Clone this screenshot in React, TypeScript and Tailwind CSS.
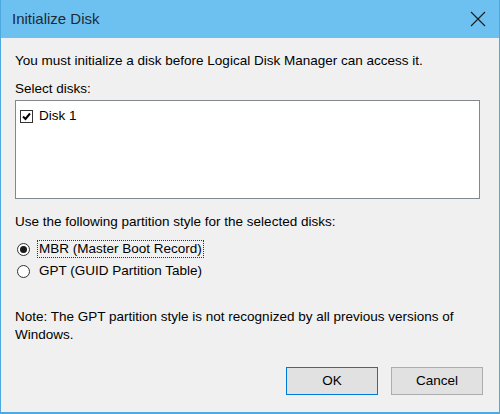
import { useState } from "react";

const FONT = { fontFamily: '"Liberation Sans", Arial, sans-serif' };

function Radio({ checked }: { checked: boolean }) {
  return (
    <span className="flex h-[13px] w-[13px] shrink-0 items-center justify-center rounded-full border border-[#333] bg-white">
      {checked && <span className="h-[7px] w-[7px] rounded-full bg-[#1a1a1a]" />}
    </span>
  );
}

export default function App() {
  const [style, setStyle] = useState<"mbr" | "gpt">("mbr");

  return (
    <div
      className="flex h-[414px] w-[500px] flex-col overflow-hidden border-b-2 border-l border-r border-[#4ea9de] bg-[#f0f0f0] text-[13.5px] text-black"
      style={FONT}
    >
      {/* title bar */}
      <div className="flex h-[38px] shrink-0 items-center justify-between bg-[#6cc1f0] pl-[11px] pr-[13px]">
        <span className="text-[15px] text-[#1e2a33]">Initialize Disk</span>
        <svg width="16" height="16" viewBox="0 0 16 16" className="text-[#1a1a1a]">
          <path d="M1 1 L15 15 M15 1 L1 15" stroke="currentColor" strokeWidth="1.1" fill="none" />
        </svg>
      </div>

      <div className="flex flex-1 flex-col px-[14px]">
        <p className="mt-[15px] leading-[16px]">
          You must initialize a disk before Logical Disk Manager can access it.
        </p>
        <p className="mt-[12px] leading-[16px]">Select disks:</p>

        <div className="mt-[3px] h-[99px] w-[465px] border border-[#828790] bg-white px-[4px] pt-[7px]">
          <label className="flex items-center gap-[6px] leading-[16px]">
            <span className="flex h-[13px] w-[13px] items-center justify-center border border-[#333] bg-white">
              <svg width="9" height="9" viewBox="0 0 9 9">
                <path d="M1 4.5 L3.5 7 L8 1.5" stroke="#000" strokeWidth="2" fill="none" />
              </svg>
            </span>
            Disk 1
          </label>
        </div>

        <p className="mt-[15px] leading-[16px]">
          Use the following partition style for the selected disks:
        </p>

        <div className="mt-[10px] flex flex-col gap-[5px] pl-[2px]">
          <button className="flex items-center gap-[7px] text-left" onClick={() => setStyle("mbr")}>
            <Radio checked={style === "mbr"} />
            <span className="border border-dotted border-[#333] px-[1px] leading-[16px]">
              MBR (Master Boot Record)
            </span>
          </button>
          <button className="flex items-center gap-[7px] text-left" onClick={() => setStyle("gpt")}>
            <Radio checked={style === "gpt"} />
            <span className="px-[2px] leading-[16px]">GPT (GUID Partition Table)</span>
          </button>
        </div>

        <p className="mt-[29px] leading-[18px]">
          Note: The GPT partition style is not recognized by all previous versions of Windows.
        </p>

        <div className="mt-auto mb-[17px] flex justify-end gap-[13px] pr-[2px]">
          <button className="h-[28px] w-[92px] border border-[#0078d7] bg-[#e1e1e1]">OK</button>
          <button className="h-[28px] w-[92px] border border-[#adadad] bg-[#e1e1e1]">Cancel</button>
        </div>
      </div>
    </div>
  );
}
